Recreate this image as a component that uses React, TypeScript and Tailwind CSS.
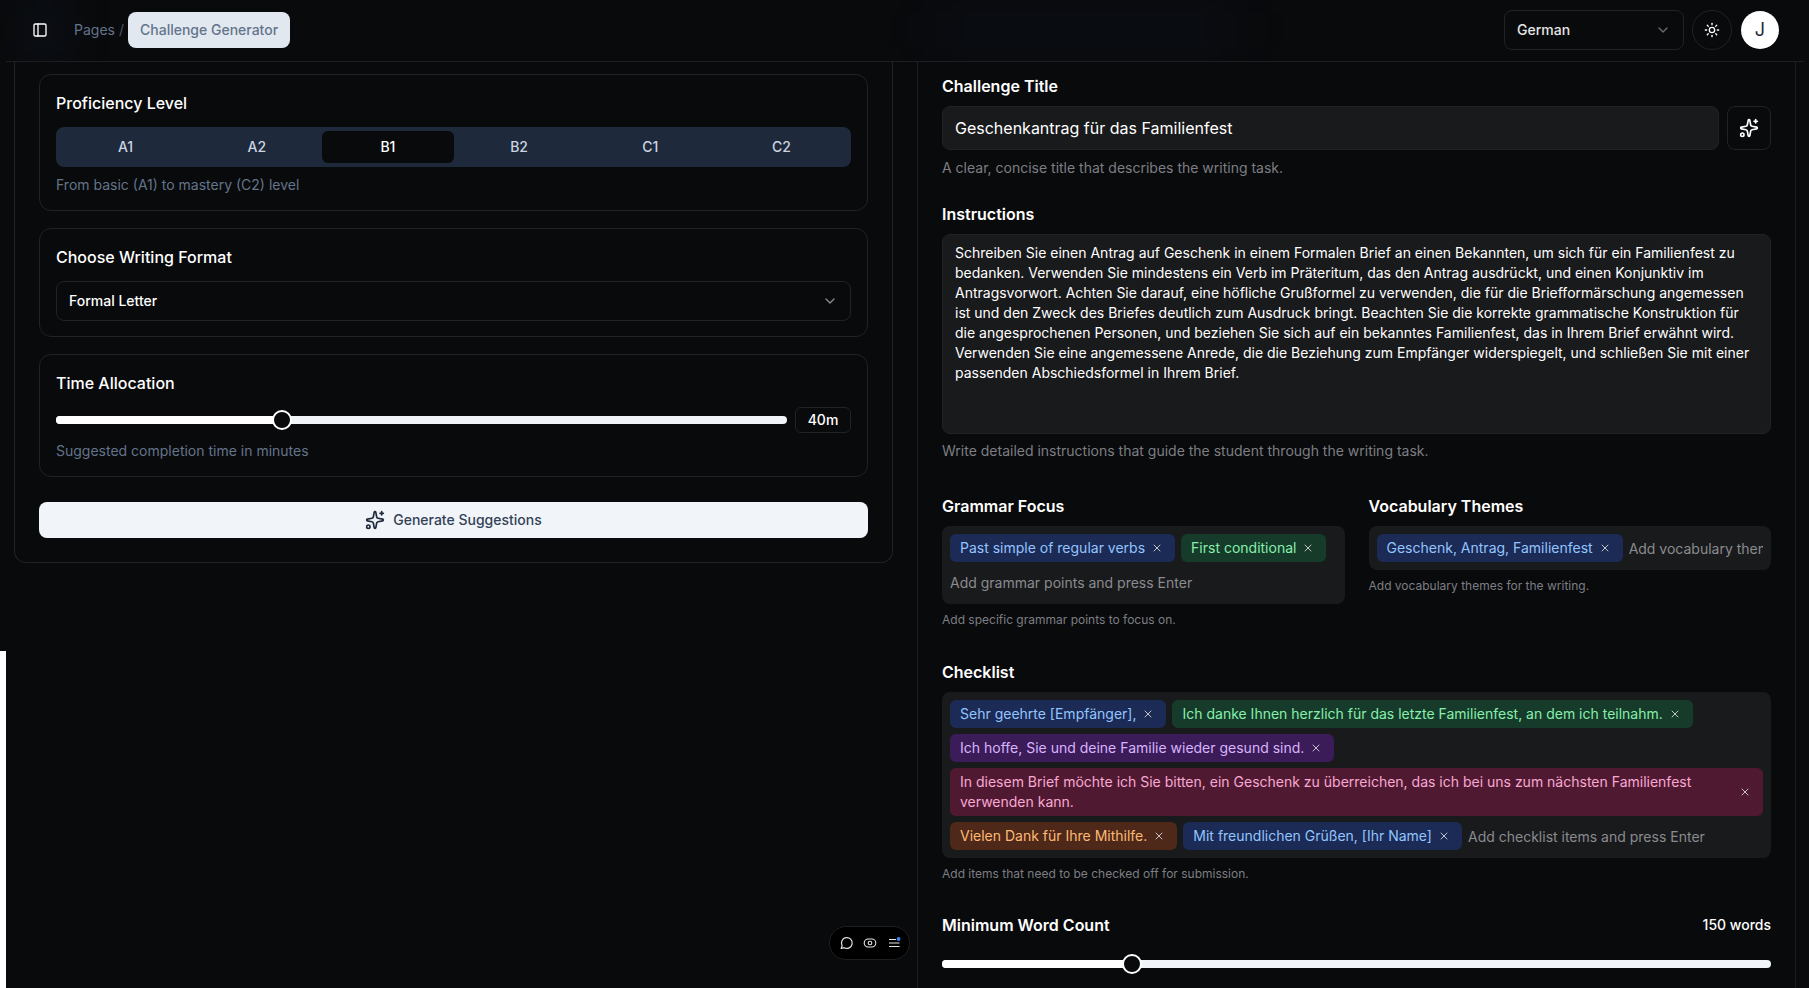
import { ChevronDown, PanelLeft, Sparkles, Sun, X } from 'lucide-react';

type ChipColor = 'blue' | 'green' | 'purple' | 'pink' | 'orange';

const chipStyles: Record<ChipColor, string> = {
  blue: 'bg-[#1c2a56] text-[#93c5fd]',
  green: 'bg-[#173b2a] text-[#86efac]',
  purple: 'bg-[#3b1c58] text-[#d8b4fe]',
  pink: 'bg-[#4f1a31] text-[#f9a8d4]',
  orange: 'bg-[#4e2819] text-[#fdba74]',
};

const levels = ['A1', 'A2', 'B1', 'B2', 'C1', 'C2'];

const instructions =
  'Schreiben Sie einen Antrag auf Geschenk in einem Formalen Brief an einen Bekannten, um sich für ein Familienfest zu bedanken. Verwenden Sie mindestens ein Verb im Präteritum, das den Antrag ausdrückt, und einen Konjunktiv im Antragsvorwort. Achten Sie darauf, eine höfliche Grußformel zu verwenden, die für die Briefformärschung angemessen ist und den Zweck des Briefes deutlich zum Ausdruck bringt. Beachten Sie die korrekte grammatische Konstruktion für die angesprochenen Personen, und beziehen Sie sich auf ein bekanntes Familienfest, das in Ihrem Brief erwähnt wird. Verwenden Sie eine angemessene Anrede, die die Beziehung zum Empfänger widerspiegelt, und schließen Sie mit einer passenden Abschiedsformel in Ihrem Brief.';

const Chip = ({ color, children }: { color: ChipColor; children: string }) => (
  <span className={`flex items-center gap-1.5 rounded-md py-1 pl-2.5 pr-3 text-sm ${chipStyles[color]}`}>
    <span>{children}</span>
    <X className="h-3 w-3 shrink-0 text-[#c4c4c8]" />
  </span>
);

const TagBox = ({ placeholder, children }: { placeholder: string; children: React.ReactNode }) => (
  <div className="flex flex-wrap gap-1.5 rounded-lg bg-[#191a1c] p-2">
    {children}
    <input
      readOnly
      placeholder={placeholder}
      className="h-7 min-w-[120px] flex-1 bg-transparent text-sm outline-none placeholder:text-[#8a8b8f]"
    />
  </div>
);

const Slider = ({ percent }: { percent: number }) => (
  <div className="relative h-2 flex-1 rounded-full bg-[#f1f5f9]">
    <div className="h-2 rounded-l-full bg-white" style={{ width: `${percent}%` }} />
    <div
      className="absolute top-1/2 h-5 w-5 -translate-x-1/2 -translate-y-1/2 rounded-full border-2 border-white bg-[#090a0c]"
      style={{ left: `${percent}%` }}
    />
  </div>
);

const Card = ({ children }: { children: React.ReactNode }) => (
  <div className="rounded-xl border border-[#212226] px-4 pb-[15px] pt-4">{children}</div>
);

const App = () => {
  return (
    <div className="flex h-screen w-full overflow-hidden bg-white font-['Inter',sans-serif] text-white">
      {/* Sidebar edge */}
      <div className="flex w-[6px] shrink-0 flex-col">
        <div className="h-[651px] bg-[#090a0c]" />
      </div>

      <div className="flex min-w-0 flex-1 flex-col bg-[#090a0c]">
        {/* Header */}
        <header className="relative flex h-[62px] shrink-0 items-center justify-between overflow-hidden border-b border-[#1d1e21] pb-px pl-[26px] pr-[25px]">
          <div className="absolute left-[24px] top-0 h-[60px] w-[30px] bg-[#12305e]/20 blur-xl" />
          <div className="absolute left-[930px] top-[10px] h-[40px] w-[300px] bg-[#12305e]/10 blur-xl" />
          <div className="relative flex items-center">
            <PanelLeft className="h-4 w-4 text-white" />
            <span className="ml-[26px] text-sm text-[#64748b]">Pages</span>
            <span className="ml-1 text-sm text-[#475569]">/</span>
            <span className="ml-1 flex h-9 items-center rounded-lg bg-[#e2e8f0] px-3 text-sm font-medium text-[#64748b]">
              Challenge Generator
            </span>
          </div>
          <div className="relative flex items-center gap-2">
            <div className="flex h-10 w-[180px] items-center justify-between rounded-lg border border-[#212226] px-3 text-sm font-medium text-[#e5e5e5]">
              German
              <ChevronDown className="h-4 w-4 text-[#6b6b70]" />
            </div>
            <div className="flex h-10 w-10 items-center justify-center rounded-full border border-[#212226]">
              <Sun className="h-4 w-4 text-white" />
            </div>
            <div className="ml-px flex h-[38px] w-[38px] items-center justify-center rounded-full bg-white text-lg text-[#1f2937]">
              J
            </div>
          </div>
        </header>

        {/* Panels */}
        <main className="grid min-h-0 flex-1 grid-cols-2 items-start gap-6 overflow-hidden px-2">
          <section className="rounded-b-xl border border-t-0 border-[#212226] px-6 pb-6 pt-3">
            <div className="flex flex-col gap-[17px]">
              <Card>
                <h3 className="text-base font-medium leading-6">Proficiency Level</h3>
                <div className="mt-3 grid h-10 grid-cols-6 rounded-lg bg-[#1e293b] p-1">
                  {levels.map((level) => (
                    <div
                      key={level}
                      className={`flex items-center justify-center rounded-md text-sm font-medium ${
                        level === 'B1' ? 'bg-[#090a0c] text-white' : 'text-[#cbd5e1]'
                      }`}
                    >
                      {level}
                    </div>
                  ))}
                </div>
                <p className="mt-2 text-sm text-[#64748b]">From basic (A1) to mastery (C2) level</p>
              </Card>

              <Card>
                <h3 className="text-base font-medium leading-6">Choose Writing Format</h3>
                <div className="mt-3 flex h-10 items-center justify-between rounded-lg border border-[#212226] px-3 text-sm font-medium">
                  Formal Letter
                  <ChevronDown className="h-4 w-4 text-[#8a8b8f]" />
                </div>
              </Card>

              <Card>
                <h3 className="text-base font-medium leading-6">Time Allocation</h3>
                <div className="mt-3 flex items-center gap-2">
                  <Slider percent={30.9} />
                  <span className="flex h-[26px] w-14 items-center justify-center rounded-md border border-[#212226] text-sm font-medium">
                    40m
                  </span>
                </div>
                <p className="mt-2 text-sm text-[#64748b]">Suggested completion time in minutes</p>
              </Card>
            </div>
            <button className="mt-[25px] flex h-9 w-full items-center justify-center gap-2 rounded-lg bg-[#f1f5f9] text-sm font-medium text-[#334155]">
              <Sparkles className="h-5 w-5 text-[#1e293b]" />
              Generate Suggestions
            </button>
          </section>

          <section className="self-stretch border-x border-[#1d1e21] px-6 pt-3">
            <h3 className="text-base font-semibold leading-6">Challenge Title</h3>
            <div className="mt-2 flex gap-2">
              <input
                readOnly
                value="Geschenkantrag für das Familienfest"
                className="h-11 flex-1 rounded-lg border border-[#212226] bg-[#191a1c] px-3 text-base text-white outline-none"
              />
              <button className="flex h-11 w-11 items-center justify-center rounded-lg border border-[#212226]">
                <Sparkles className="h-5 w-5" />
              </button>
            </div>
            <p className="mt-2 text-sm text-[#7d7e83]">A clear, concise title that describes the writing task.</p>

            <h3 className="mt-6 text-base font-semibold leading-6">Instructions</h3>
            <textarea
              readOnly
              value={instructions}
              className="mt-2 block h-[200px] w-full resize-none rounded-lg border border-[#212226] bg-[#191a1c] px-3 py-2 text-sm text-white outline-none"
            />
            <p className="mt-[7px] text-sm text-[#7d7e83]">Write detailed instructions that guide the student through the writing task.</p>

            <div className="mt-[33px] grid grid-cols-2 items-start gap-6">
              <div>
                <h3 className="text-base font-semibold leading-6">Grammar Focus</h3>
                <div className="mt-2">
                  <TagBox placeholder="Add grammar points and press Enter">
                    <Chip color="blue">Past simple of regular verbs</Chip>
                    <Chip color="green">First conditional</Chip>
                  </TagBox>
                </div>
                <p className="mt-2 text-xs text-[#7d7e83]">Add specific grammar points to focus on.</p>
              </div>
              <div>
                <h3 className="text-base font-semibold leading-6">Vocabulary Themes</h3>
                <div className="mt-2">
                  <TagBox placeholder="Add vocabulary themes and press Enter">
                    <Chip color="blue">Geschenk, Antrag, Familienfest</Chip>
                  </TagBox>
                </div>
                <p className="mt-2 text-xs text-[#7d7e83]">Add vocabulary themes for the writing.</p>
              </div>
            </div>

            <h3 className="mt-8 text-base font-semibold leading-6">Checklist</h3>
            <div className="mt-2">
              <TagBox placeholder="Add checklist items and press Enter">
                <Chip color="blue">Sehr geehrte [Empfänger],</Chip>
                <Chip color="green">Ich danke Ihnen herzlich für das letzte Familienfest, an dem ich teilnahm.</Chip>
                <Chip color="purple">Ich hoffe, Sie und deine Familie wieder gesund sind.</Chip>
                <Chip color="pink">In diesem Brief möchte ich Sie bitten, ein Geschenk zu überreichen, das ich bei uns zum nächsten Familienfest verwenden kann.</Chip>
                <Chip color="orange">Vielen Dank für Ihre Mithilfe.</Chip>
                <Chip color="blue">Mit freundlichen Grüßen, [Ihr Name]</Chip>
              </TagBox>
            </div>
            <p className="mt-2 text-xs text-[#7d7e83]">Add items that need to be checked off for submission.</p>

            <div className="mt-[31px] flex items-center justify-between">
              <h3 className="text-base font-semibold leading-6">Minimum Word Count</h3>
              <span className="text-sm font-medium">150 words</span>
            </div>
            <div className="mt-[23px] flex">
              <Slider percent={22.9} />
            </div>
          </section>
        </main>
      </div>

      <div className="w-[5px] shrink-0 bg-[#090a0c]" />

      {/* Floating toolbar */}
      <div className="absolute left-[829px] top-[926px] flex h-[34px] w-[81px] items-center justify-center gap-2 rounded-full border border-[#1d1e21] bg-black">
        <svg viewBox="0 0 16 16" className="h-4 w-4 text-[#e5e5e5]" fill="none" stroke="currentColor" strokeWidth="1.2" strokeLinecap="round" strokeLinejoin="round">
          <path d="M3.2 13.5l.9-2.9A5.4 5.4 0 1 1 6.2 12.7z" />
        </svg>
        <svg viewBox="0 0 16 16" className="h-4 w-4 text-[#e5e5e5]" fill="none" stroke="currentColor" strokeWidth="1.1">
          <rect x="2.2" y="4" width="11.6" height="8" rx="4" />
          <circle cx="8" cy="8" r="1.8" />
        </svg>
        <svg viewBox="0 0 16 16" className="h-4 w-4 text-[#e5e5e5]" fill="none" stroke="currentColor" strokeWidth="1.1">
          <path d="M3 4.5h7M3 8h10.5M3 11.5h10.5" />
          <circle cx="12.6" cy="4" r="1.9" fill="#3b82f6" stroke="none" />
        </svg>
      </div>
    </div>
  );
};

export default App;
